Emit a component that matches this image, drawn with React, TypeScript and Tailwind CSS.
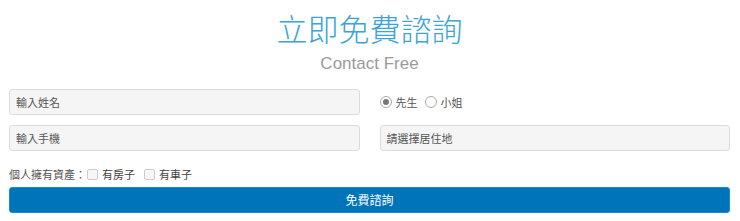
import { useState } from "react";

const cjk = "font-['Noto_Sans_CJK_TC','Noto_Sans_CJK_SC',sans-serif]";

function Radio({ label, checked, onClick }: { label: string; checked: boolean; onClick: () => void }) {
  return (
    <label onClick={onClick} className="flex cursor-pointer items-center gap-[4px] text-[11px] text-[#555]">
      <span className="flex h-[12px] w-[12px] items-center justify-center rounded-full border border-[#aaa] bg-white">
        {checked && <span className="h-[6px] w-[6px] rounded-full bg-[#777]" />}
      </span>
      {label}
    </label>
  );
}

function Check({ label, checked, onClick }: { label: string; checked: boolean; onClick: () => void }) {
  return (
    <label onClick={onClick} className="flex cursor-pointer items-center gap-[4px] text-[11px] text-[#444]">
      <span className="flex h-[11px] w-[11px] items-center justify-center rounded-[2px] border border-[#ccc] bg-[#f7f7f7] text-[9px] leading-none text-[#555]">
        {checked ? "✓" : ""}
      </span>
      {label}
    </label>
  );
}

export default function App() {
  const [gender, setGender] = useState<"m" | "f">("m");
  const [house, setHouse] = useState(false);
  const [car, setCar] = useState(false);

  const field =
    "h-[26px] w-full rounded-[3px] border border-[#dcdcdc] bg-[#f5f5f5] px-[6px] text-[11px] text-[#555] outline-none placeholder:text-[#555]";

  return (
    <div className={`h-[221px] w-[740px] bg-white pl-[9px] pr-[10px] ${cjk}`}>
      <h1 className="pt-[11px] text-center text-[31px] font-light leading-[34px] text-[#3da4d6]">立即免費諮詢</h1>
      <p className="mt-[8px] text-center font-['Liberation_Sans',sans-serif] text-[17px] leading-[22px] text-[#9a9a9a]">
        Contact Free
      </p>

      <div className="mt-[14px] grid grid-cols-2 gap-x-[20px] gap-y-[10px]">
        <input className={field} placeholder="輸入姓名" />
        <div className="flex h-[26px] items-center gap-[7px]">
          <Radio label="先生" checked={gender === "m"} onClick={() => setGender("m")} />
          <Radio label="小姐" checked={gender === "f"} onClick={() => setGender("f")} />
        </div>
        <input className={field} placeholder="輸入手機" />
        <input className={field} placeholder="請選擇居住地" />
      </div>

      <div className="mt-[14px] flex h-[18px] items-center">
        <span className="text-[11px] text-[#555]">個人擁有資產：</span>
        <div className="ml-[1px] flex items-center gap-[9px]">
          <Check label="有房子" checked={house} onClick={() => setHouse(!house)} />
          <Check label="有車子" checked={car} onClick={() => setCar(!car)} />
        </div>
      </div>

      <button className="mt-[4px] h-[26px] w-full rounded-[3px] border border-[#1a8ad0] bg-[#0074bb] text-[12px] text-white">
        免費諮詢
      </button>
    </div>
  );
}
